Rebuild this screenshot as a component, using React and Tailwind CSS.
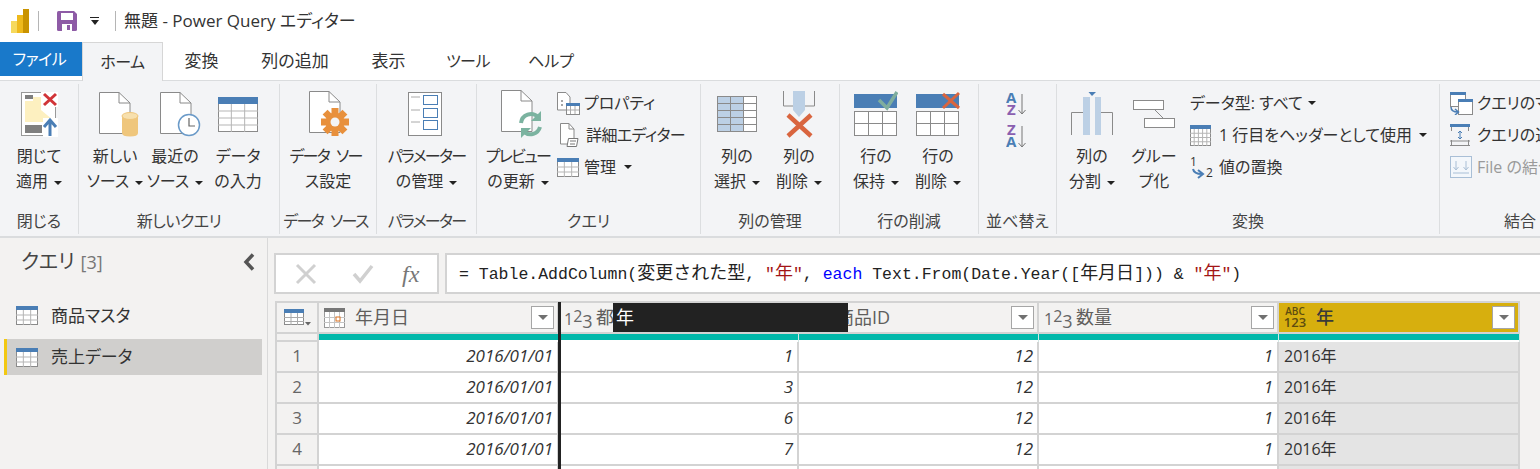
import React from 'react';

const Caret = ({ className = 'ml-[6px]' }) => (
  <span className={`inline-block w-0 h-0 align-middle border-x-[4px] border-t-[4px] border-x-transparent border-t-[#222] ${className}`} />
);

// ---- icons ----
const GridTable = ({ w = 22, h = 18, head = 5, cols = 3, rows = 3, grid = '#b5b5b5', edge = '#8a8a8a' }) => {
  const xs = Array.from({ length: cols - 1 }, (_, i) => ((i + 1) * w) / cols);
  const ys = Array.from({ length: rows - 1 }, (_, i) => head + ((i + 1) * (h - head)) / rows);
  return (
    <svg width={w} height={h} viewBox={`0 0 ${w} ${h}`}>
      <rect x=".5" y=".5" width={w - 1} height={h - 1} fill="#fff" stroke={edge} />
      {xs.map((x) => <line key={x} x1={x} x2={x} y1={head} y2={h} stroke={grid} />)}
      {ys.map((y) => <line key={y} x1="0" x2={w} y1={y} y2={y} stroke={grid} />)}
      <rect width={w} height={head} fill="#4a7eb5" />
    </svg>
  );
};

const Doc = () => (
  <g>
    <path d="M.5.5H20L31 11V41.5H.5Z" fill="#fff" stroke="#8a8a8a" />
    <path d="M20 .5V11H31" fill="none" stroke="#8a8a8a" />
  </g>
);

const ApplyIcon = () => (
  <svg width="37" height="45" viewBox="0 0 37 45">
    <rect x=".5" y=".5" width="34" height="43" fill="#fff" stroke="#999" />
    <rect x="4" y="3" width="8" height="4" fill="#7f7f7f" />
    <rect x="4" y="9" width="8" height="21" fill="#fdf0c0" />
    <path d="M12 5H20V18L32 28L22 30H12Z" fill="#fdf0c0" />
    <rect x="4" y="33" width="17" height="8" fill="#7f7f7f" />
    <rect x="20" y="0" width="17" height="15" fill="#fff" />
    <rect x="22" y="26" width="15" height="19" fill="#fff" />
    <path d="M23 2L35 13M35 2L23 13" stroke="#d13438" strokeWidth="3" />
    <path d="M29 44V29M23 35L29 28L35 35" stroke="#4a7eb5" strokeWidth="3" fill="none" />
  </svg>
);

const NewSourceIcon = () => (
  <svg width="40" height="45" viewBox="0 0 40 45">
    <Doc />
    <path d="M23 24V41Q23 44.500 31 44.500T39 41V24Z" fill="#efc67c" />
    <ellipse cx="31" cy="24" rx="8" ry="3.500" fill="#f7e0ae" stroke="#efc67c" />
  </svg>
);

const RecentIcon = () => (
  <svg width="42" height="45" viewBox="0 0 42 45">
    <Doc />
    <circle cx="29" cy="33" r="10.500" fill="#fff" stroke="#6a9ac8" strokeWidth="1.500" />
    <path d="M29 26V34H35" fill="none" stroke="#666" strokeWidth="1.200" />
  </svg>
);

const GearDocIcon = () => (
  <svg width="42" height="46" viewBox="0 0 42 46">
    <Doc />
    {[0, 45, 90, 135].map((a) => (
      <rect key={a} x="22.500" y="17" width="7" height="28" fill="#e8903c" transform={`rotate(${a} 26 31)`} />
    ))}
    <circle cx="26" cy="31" r="9.500" fill="#e8903c" />
    <circle cx="26" cy="31" r="4.500" fill="#f3f4f6" />
  </svg>
);

const ParamIcon = () => (
  <svg width="34" height="44" viewBox="0 0 34 44">
    <rect x=".5" y=".5" width="33" height="43" fill="#fff" stroke="#8a8a8a" />
    {[4, 17, 29].map((y) => (
      <g key={y}>
        <line x1="3" x2="12" y1={y + 1} y2={y + 1} stroke="#aaa" />
        <rect x="15.500" y={y - 0.5} width="14" height="9" fill="#fff" stroke="#4a7eb5" />
      </g>
    ))}
  </svg>
);

const PreviewIcon = () => (
  <svg width="42" height="48" viewBox="0 0 42 48">
    <Doc />
    <g transform="translate(0 2)">
      <path d="M20 31A10 10 0 0 1 37 25" fill="none" stroke="#7bb3a0" strokeWidth="4" />
      <path d="M40 19V29H30Z" fill="#7bb3a0" />
      <path d="M39 35A10 10 0 0 1 23 40" fill="none" stroke="#7bb3a0" strokeWidth="4" />
      <path d="M20 46V36H30Z" fill="#7bb3a0" />
    </g>
  </svg>
);

const SelectColsIcon = () => (
  <svg width="40" height="36" viewBox="0 0 40 36">
    <rect x=".5" y=".5" width="39" height="35" fill="#fff" stroke="#8a8a8a" />
    <rect x="1" y="1" width="26" height="34" fill="#bcd0e5" />
    {[13, 26].map((x) => <line key={x} x1={x + 0.5} x2={x + 0.5} y1="0" y2="36" stroke="#8a8a8a" />)}
    {[7, 14, 21, 28].map((y) => <line key={y} x1="0" x2="40" y1={y + 0.5} y2={y + 0.5} stroke="#8a8a8a" />)}
  </svg>
);

const RemoveColsIcon = () => (
  <svg width="33" height="47" viewBox="0 0 33 47">
    <path d="M.5 0V15H10M22 15H31.500V0" fill="none" stroke="#8a8a8a" />
    <path d="M10 0H22V19L16 26L10 19Z" fill="#bcd0e5" />
    <path d="M5 45L28 24M5 24L28 45" stroke="#d9653f" strokeWidth="4.500" />
  </svg>
);

const RowsIcon = ({ check }) => (
  <svg width="44" height="46" viewBox="0 0 44 46">
    <rect x="0" y="3" width="43" height="14" fill="#4a7eb5" />
    <rect x=".5" y="20.500" width="42" height="24" fill="#fff" stroke="#8a8a8a" />
    <path d="M14.500 20V45M28.500 20V45M0 32.500H43" stroke="#8a8a8a" />
    {check ? (
      <path d="M25 9L33 17L43 1" fill="none" stroke="#7fae9e" strokeWidth="3.500" />
    ) : (
      <path d="M27 3L43 17M43 2L27 17" fill="none" stroke="#d9653f" strokeWidth="3" />
    )}
  </svg>
);

const SortIcon = () => (
  <svg width="24" height="56" viewBox="0 0 24 56" className="font-bold">
    <text x="0" y="11" fontSize="15" fill="#4a7eb5">A</text>
    <text x="1" y="23" fontSize="15" fill="#8a5fb0">Z</text>
    <path d="M16 2V21M12.500 18L16 22L19.500 18" fill="none" stroke="#777" />
    <text x="1" y="43" fontSize="15" fill="#8a5fb0">Z</text>
    <text x="0" y="55" fontSize="15" fill="#4a7eb5">A</text>
    <path d="M16 34V54M12.500 51L16 55L19.500 51" fill="none" stroke="#777" />
  </svg>
);

const SplitIcon = () => (
  <svg width="42" height="44" viewBox="0 0 42 44">
    <path d="M.5 43V20.500H12M30 20.500H41.500V43" fill="none" stroke="#8a8a8a" />
    <rect x="12" y="5" width="7" height="38" fill="#bcd0e5" />
    <rect x="24" y="5" width="6" height="38" fill="#bcd0e5" />
    <path d="M17.500 0H25L21 4Z" fill="#4a7eb5" />
  </svg>
);

const GroupIcon = () => (
  <svg width="42" height="29" viewBox="0 0 42 29">
    <rect x=".5" y=".5" width="30" height="9" fill="#fff" stroke="#8a8a8a" />
    <rect x="11.500" y="18.500" width="30" height="9" fill="#fff" stroke="#8a8a8a" />
    <line x1="22" y1="10" x2="30" y2="18" stroke="#8a8a8a" />
  </svg>
);

const PropsIcon = () => (
  <svg width="23" height="23" viewBox="0 0 23 23">
    <path d="M.5.500H9L13 5V18H.5Z" fill="#fff" stroke="#8a8a8a" />
    <circle cx="5" cy="9" r="1" fill="#888" /><circle cx="5" cy="13" r="1" fill="#888" />
    <rect x="9.500" y="11.500" width="13" height="11" fill="#fff" stroke="#8a8a8a" />
    <rect x="9" y="11" width="14" height="3" fill="#4a7eb5" />
    <path d="M13.500 14V22M18 14V22M10 18H22" stroke="#aaa" />
  </svg>
);

const EditorIcon = () => (
  <svg width="19" height="24" viewBox="0 0 19 24" className="ml-[3px]">
    <path d="M.5.500H9L14 6V21H.5Z" fill="#fff" stroke="#8a8a8a" />
    <path d="M9 .5V6H14" fill="none" stroke="#8a8a8a" />
    <path d="M8.500 15.500H18L16.500 23.500H7Z" fill="#fff" stroke="#777" />
    <path d="M10 18H16M10 21H15" stroke="#777" />
  </svg>
);

const ReplaceIcon = () => (
  <svg width="24" height="24" viewBox="0 0 24 24">
    <text x="0" y="11" fontSize="12" fill="#333">1</text>
    <text x="16" y="22" fontSize="12" fill="#333">2</text>
    <path d="M3 14Q4 19 12 19M8 15L13 19L8 23" fill="none" stroke="#4a7eb5" strokeWidth="2" />
  </svg>
);

const MergeIcon = () => (
  <svg width="23" height="23" viewBox="0 0 23 23">
    <rect x=".5" y=".5" width="15" height="14" fill="#fff" stroke="#8a8a8a" />
    <rect x="0" y="0" width="16" height="3" fill="#4a7eb5" />
    <rect x="8.500" y="7.500" width="14" height="15" fill="#fff" stroke="#8a8a8a" />
    <rect x="8" y="7" width="15" height="3" fill="#4a7eb5" />
    <path d="M1 15Q1 20 8 20M5 17L8.500 20L5 23" fill="none" stroke="#4a7eb5" strokeWidth="1.500" />
  </svg>
);

const AppendIcon = () => (
  <svg width="20" height="22" viewBox="0 0 20 22">
    <rect x="0" y="0" width="20" height="3" fill="#4a7eb5" />
    <path d="M1.500 3V7M18.500 3V7M1.500 16V21M18.500 16V21M0 17H20M0 21.500H20" stroke="#8a8a8a" fill="none" />
    <path d="M10 7V15M8 9L10 7L12 9M8 13L10 15L12 13" stroke="#4a7eb5" fill="none" />
  </svg>
);

const CombineIcon = () => (
  <svg width="22" height="22" viewBox="0 0 22 22">
    <rect x=".5" y=".5" width="21" height="21" fill="#f3f7fb" stroke="#a9bfd6" />
    <path d="M6 5V13M3.500 11L6 14L8.500 11M16 5V13M13.500 11L16 14L18.500 11M3 17H19" fill="none" stroke="#a9bfd6" />
  </svg>
);

const TypeNum = () => (
  <span className="w-[22px] shrink-0 text-[#666] text-[16px] leading-none whitespace-nowrap">
    1<span className="text-[16px] relative -top-[3px]">2</span><span className="text-[18px] relative top-[3px]">3</span>
  </span>
);

const TypeAny = () => (
  <span className="w-[22px] shrink-0 flex flex-col items-center text-[#5d4c10] leading-none font-semibold">
    <span className="text-[10px]">ABC</span>
    <span className="text-[13px]">123</span>
  </span>
);

const DateType = () => (
  <svg width="21" height="20" viewBox="0 0 21 20">
    <rect x=".5" y=".5" width="20" height="19" fill="#fff" stroke="#999" />
    <rect width="21" height="4" fill="#777" />
    <path d="M5.500 4V20M10.500 4V20M15.500 4V20M0 9.500H21M0 14.500H21" stroke="#c4c4c4" />
    <rect x="12" y="9" width="4" height="4" fill="#fff" stroke="#d9701f" />
  </svg>
);

const CellsIcon = () => (
  <svg width="27" height="18" viewBox="0 0 27 18">
    <rect x=".5" y=".5" width="19" height="15" fill="#fff" stroke="#8a8a8a" />
    <rect width="20" height="4" fill="#4a7eb5" />
    <path d="M7 4V16M13.500 4V16M0 8.500H20M0 12.500H20" stroke="#aaa" />
    <path d="M21 13H27L24 16.500Z" fill="#666" />
  </svg>
);

// ---- ribbon parts ----
const Big = ({ icon, a, b, caret, w, shift = '' }) => (
  <div className={`flex flex-col items-center shrink-0 ${w}`}>
    <div className={`h-[50px] flex items-center justify-center ${shift}`}>{icon}</div>
    <div className="mt-[5px] text-center leading-[25px] whitespace-nowrap">
      <div>{a}</div>
      <div>{b}{caret && <Caret />}</div>
    </div>
  </div>
);

const Small = ({ icon, children, grey }) => (
  <div className={`h-[32px] flex items-center whitespace-nowrap ${grey ? 'text-[#9a9a9a]' : ''}`}>
    <span className="w-[27px] shrink-0 flex items-center">{icon}</span>
    {children}
  </div>
);

const Group = ({ label, w, children, last }) => (
  <div className={`flex flex-col h-[150px] shrink-0 ${w} ${last ? '' : 'border-r border-[#dcdee0]'}`}>
    <div className="h-[125px] pt-[5px] flex">{children}</div>
    <div className="h-[24px] leading-[24px] text-center text-[#444] whitespace-nowrap">{label}</div>
  </div>
);

const Ribbon = () => (
  <div className="h-[157px] py-[3px] flex bg-[#f3f4f6] border-b-2 border-[#dadcde] text-[16px] text-[#333]">
    <Group label="閉じる" w="w-[79px]">
      <Big w="w-[78px]" icon={<ApplyIcon />} a="閉じて" b="適用" caret />
    </Group>
    <Group label={<span className="tracking-[-0.5px]">新しいクエリ</span>} w="w-[201px]">
      <div className="flex pl-[6px]">
        <Big w="w-[60px]" shift="ml-[8px]" icon={<NewSourceIcon />} a="新しい" b="ソース" caret />
        <Big w="w-[60px]" shift="ml-[12px]" icon={<RecentIcon />} a="最近の" b="ソース" caret />
        <Big w="w-[66px]" icon={<GridTable w={40} h={35} head={7} cols={3} rows={4} />} a="データ" b="の入力" />
      </div>
    </Group>
    <Group label={<span className="tracking-[-1.6px] inline-block pr-[5px]">データ<span className="ml-[7px]">ソース</span></span>} w="w-[97px]">
      <Big w="w-[96px]" shift="ml-[3px]" icon={<GearDocIcon />} a={<span className="tracking-[-1.7px] inline-block pr-[5px]">データ<span className="ml-[7px]">ソー</span></span>} b="ス設定" />
    </Group>
    <Group label={<span className="tracking-[-1.7px]">パラメーター</span>} w="w-[100px]">
      <Big w="w-[99px]" shift="-ml-[3px]" icon={<ParamIcon />} a={<span className="tracking-[-1.7px]">パラメーター</span>} b="の管理" caret />
    </Group>
    <Group label="クエリ" w="w-[224px]">
      <div className="flex pl-[2px]">
        <Big w="w-[78px]" shift="ml-[8px]" icon={<PreviewIcon />} a={<span className="tracking-[-1.6px]">プレビュー</span>} b="の更新" caret />
        <div className="-mt-[2px]">
          <Small icon={<PropsIcon />}>プロパティ</Small>
          <Small icon={<EditorIcon />}><span className="tracking-[-0.6px] ml-[2px]">詳細エディター</span></Small>
          <Small icon={<GridTable w={22} h={19} head={4} cols={3} rows={3} />}>管理<Caret className="ml-[8px]" /></Small>
        </div>
      </div>
    </Group>
    <Group label="列の管理" w="w-[139px]">
      <div className="flex pl-[5px]">
        <Big w="w-[62px]" icon={<SelectColsIcon />} a="列の" b="選択" caret />
        <Big w="w-[62px]" icon={<RemoveColsIcon />} a="列の" b="削除" caret />
      </div>
    </Group>
    <Group label="行の削減" w="w-[139px]">
      <div className="flex pl-[5px]">
        <Big w="w-[62px]" icon={<RowsIcon check />} a="行の" b="保持" caret />
        <Big w="w-[62px]" icon={<RowsIcon />} a="行の" b="削除" caret />
      </div>
    </Group>
    <Group label="並べ替え" w="w-[78px]">
      <div className="w-full flex justify-center pt-[3px]"><SortIcon /></div>
    </Group>
    <Group label="変換" w="w-[383px]">
      <div className="flex pl-[6px]">
        <Big w="w-[58px]" icon={<SplitIcon />} a="列の" b="分割" caret />
        <Big w="w-[66px]" icon={<GroupIcon />} a="グルー" b="プ化" />
        <div className="pl-[3px] -mt-[2px]">
          <div className="h-[32px] flex items-center whitespace-nowrap">データ型: すべて<Caret className="ml-[5px]" /></div>
          <Small icon={<GridTable w={21} h={21} head={4} cols={5} rows={4} />}>
            <span className="pl-[2px]">1 行目をヘッダーとして使用</span><Caret className="ml-[7px]" />
          </Small>
          <Small icon={<ReplaceIcon />}><span className="pl-[2px]">値の置換</span></Small>
        </div>
      </div>
    </Group>
    <Group label="結合" w="w-[160px]" last>
      <div className="pl-[10px] -mt-[2px]">
        <Small icon={<MergeIcon />}>クエリのマージ</Small>
        <Small icon={<AppendIcon />}>クエリの追加</Small>
        <Small icon={<CombineIcon />} grey>File の結合</Small>
      </div>
    </Group>
  </div>
);

const tabs = [
  ['変換', 'w-[77px]', 'text-[17px]'],
  ['列の追加', 'w-[110px]', 'text-[17px]'],
  ['表示', 'w-[77px]', 'text-[17px]'],
  ['ツール', 'w-[82px]', 'text-[16px] tracking-[-0.5px]'],
  ['ヘルプ', 'w-[84px]', 'text-[16px]'],
];

// ---- table ----
const Drop = () => (
  <span className="ml-auto mr-[3px] w-[23px] h-[23px] shrink-0 flex items-center justify-center bg-white border border-[#a6a6a6]">
    <span className="w-0 h-0 border-x-[5px] border-t-[5px] border-x-transparent border-t-[#707070]" />
  </span>
);

const columns = [
  { icon: <DateType />, name: '年月日' },
  { icon: <TypeNum />, name: '都道府県ID' },
  { icon: <TypeNum />, name: '商品ID' },
  { icon: <TypeNum />, name: '数量' },
];

const rows = [
  ['1', '1'],
  ['2', '3'],
  ['3', '6'],
  ['4', '7'],
];

const cell = 'border-r-2 border-b-2 border-[#d3d3d3]';
const dataCell = `${cell} bg-white h-[31px] pb-[2px] flex items-center justify-end pr-[4px] italic text-[#333] text-[17px]`;

const DataTable = () => (
  <div className="relative w-[1245px] ml-[1px] border-t-2 border-l-2 border-[#d3d3d3] text-[16px]">
    <div className="grid grid-cols-[42px_240px_240px_240px_240px_241px]">
      {/* header */}
      <div className={`${cell} h-[31px] flex items-center pl-[7px]`}><CellsIcon /></div>
      {columns.map((c) => (
        <div key={c.name} className={`${cell} h-[31px] flex items-center pl-[5px] text-[#605e5c] text-[18px] whitespace-nowrap`}>
          {c.icon}<span className="ml-[10px]">{c.name}</span><Drop />
        </div>
      ))}
      <div className={`${cell} h-[31px] flex items-center pl-[5px] bg-[#d7af0e] text-[#3a3a3a] text-[18px] font-medium`}>
        <TypeAny /><span className="ml-[10px]">年</span><Drop />
      </div>

      {/* column quality band */}
      <div className={`${cell} h-[8px] border-b-0`} />
      {[0, 1, 2, 3, 4].map((i) => (
        <div key={i} className="h-[8px] pb-[1px] border-r border-[#d3e7e4] bg-white"><div className="h-[6px] bg-[#01b8aa]" /></div>
      ))}

      {rows.map(([n, city]) => (
        <React.Fragment key={n}>
          <div className={`${cell} h-[31px] pb-[2px] flex items-center justify-center text-[#666] text-[17px]`}>{n}</div>
          <div className={dataCell}>2016/01/01</div>
          <div className={dataCell}>{city}</div>
          <div className={dataCell}>12</div>
          <div className={dataCell}>1</div>
          <div className={`${cell} h-[31px] pb-[2px] flex items-center pl-[5px] bg-[#e4e4e4] text-[#333]`}>2016年</div>
        </React.Fragment>
      ))}
      <div className={`${cell} h-[31px]`} />
      <div className={`${cell} h-[31px] bg-white`} />
      <div className={`${cell} h-[31px] bg-white`} />
      <div className={`${cell} h-[31px] bg-white`} />
      <div className={`${cell} h-[31px] bg-white`} />
      <div className={`${cell} h-[31px] bg-[#e4e4e4]`} />
    </div>

    {/* column being dragged */}
    <div className="absolute left-[281px] -top-[1px] bottom-0 w-[3px] bg-[#222]" />
    <div className="absolute left-[336px] top-0 w-[235px] h-[29px] bg-[#222] text-white text-[18px] leading-[29px] pl-[3px]">年</div>
  </div>
);

export default function App() {
  return (
    <div className="w-[1540px] h-[469px] overflow-hidden bg-white text-[#333] [font-family:'Open_Sans','Noto_Sans_CJK_JP',sans-serif] [font-feature-settings:'palt']">
      {/* title bar */}
      <div className="h-[42px] flex items-center">
        <svg width="18" height="24" viewBox="0 0 18 24" className="ml-[11px] shrink-0">
          <rect x="0" y="12" width="8" height="12" fill="#f6d95c" />
          <rect x="6" y="6" width="6" height="18" fill="#eeb91c" />
          <rect x="12" y="0" width="6" height="24" fill="#c99300" />
        </svg>
        <span className="ml-[9px] w-px h-[20px] bg-[#b5b5b5]" />
        <svg width="20" height="20" viewBox="0 0 20 20" className="ml-[18px]">
          <path d="M0 1.500Q0 0 1.500 0H17L20 3V18.500Q20 20 18.500 20H1.500Q0 20 0 18.500Z" fill="#8e5ba6" />
          <rect x="4" y="2" width="12" height="7" fill="#fff" />
          <rect x="5" y="13" width="10" height="7" fill="#fff" />
          <rect x="10" y="14" width="3" height="5" fill="#8e5ba6" />
        </svg>
        <span className="ml-[13px] flex flex-col items-center gap-[2px]">
          <span className="w-[9px] h-px bg-[#222]" />
          <span className="w-0 h-0 border-x-[4px] border-t-[5px] border-x-transparent border-t-[#222]" />
        </span>
        <span className="ml-[16px] w-px h-[20px] bg-[#b5b5b5]" />
        <span className="ml-[8px] text-[17px] text-[#333] whitespace-nowrap">無題 - Power Query エディター</span>
      </div>

      {/* tabs */}
      <div className="h-[39px] flex border-b border-[#dadcde]">
        <div className="w-[82px] h-[34px] pr-[3px] bg-[#1979ca] text-white text-[16px] tracking-[-0.5px] flex items-center justify-center">ファイル</div>
        <div className="w-[81px] h-[39px] bg-[#f3f4f6] border-x border-t border-[#d6d6d6] text-[16px] tracking-[-0.5px] flex items-center justify-center">ホーム</div>
        {tabs.map(([name, w, size]) => (
          <div key={name} className={`${w} ${size} flex items-center justify-center`}>{name}</div>
        ))}
      </div>

      <Ribbon />

      {/* body */}
      <div className="h-[231px] flex bg-[#f3f2f1]">
        <div className="w-[268px] shrink-0 border-r border-[#d9d9d9] pt-[10px]">
          <div className="h-[28px] flex items-center pl-[21px] pr-[12px]">
            <span className="text-[20px] text-[#444]">クエリ</span>
            <span className="ml-[6px] text-[18px] text-[#777]">[3]</span>
            <svg width="12" height="18" viewBox="0 0 12 18" className="ml-auto">
              <path d="M10 1.500L3 9L10 16.500" fill="none" stroke="#555" strokeWidth="3.500" />
            </svg>
          </div>
          <div className="mt-[21px] h-[37px] ml-[4px] mr-[5px] flex items-center pl-[12px] text-[17px]">
            <GridTable w={22} h={19} head={4} />
            <span className="ml-[13px]">商品マスタ</span>
          </div>
          <div className="mt-[5px] h-[36px] ml-[4px] mr-[5px] flex items-center pl-[9px] text-[17px] bg-[#d0cfcd] border-l-[3px] border-[#f2c811]">
            <GridTable w={22} h={19} head={4} />
            <span className="ml-[13px]">売上データ</span>
          </div>
        </div>

        <div className="flex-1 min-w-0 pl-[6px]">
          <div className="mt-[15px] h-[41px] flex gap-[6px]">
            <div className="w-[165px] shrink-0 bg-white border-2 border-[#d3d3d3] flex items-center">
              <svg width="22" height="22" viewBox="0 0 22 22" className="ml-[19px]">
                <path d="M2 2L20 20M20 2L2 20" stroke="#d0d0d0" strokeWidth="3" />
              </svg>
              <svg width="22" height="20" viewBox="0 0 22 20" className="ml-[35px]">
                <path d="M2 10L8 17L20 2" fill="none" stroke="#d0d0d0" strokeWidth="3.500" />
              </svg>
              <span className="ml-[28px] text-[#777] text-[24px] leading-none italic [font-family:'Liberation_Serif',serif]">fx</span>
            </div>
            <div className="flex-1 min-w-0 pt-[1px] bg-white border-y-2 border-l-2 border-[#d3d3d3] flex items-center pl-[12px] text-[16.500px] text-[#222] whitespace-nowrap [font-family:'Liberation_Mono','Noto_Sans_CJK_JP',monospace] [font-feature-settings:normal]">
              <span>= Table.AddColumn(<span className="text-[18px]">変更された型</span>, <span className="text-[#a31515]">"<span className="text-[18px]">年</span>"</span>, <span className="text-[#0000ff]">each</span> Text.From(Date.Year([<span className="text-[18px]">年月日</span>])) &amp; <span className="text-[#a31515]">"<span className="text-[18px]">年</span>"</span>)</span>
            </div>
          </div>
          <div className="mt-[7px]"><DataTable /></div>
        </div>
      </div>
    </div>
  );
}
